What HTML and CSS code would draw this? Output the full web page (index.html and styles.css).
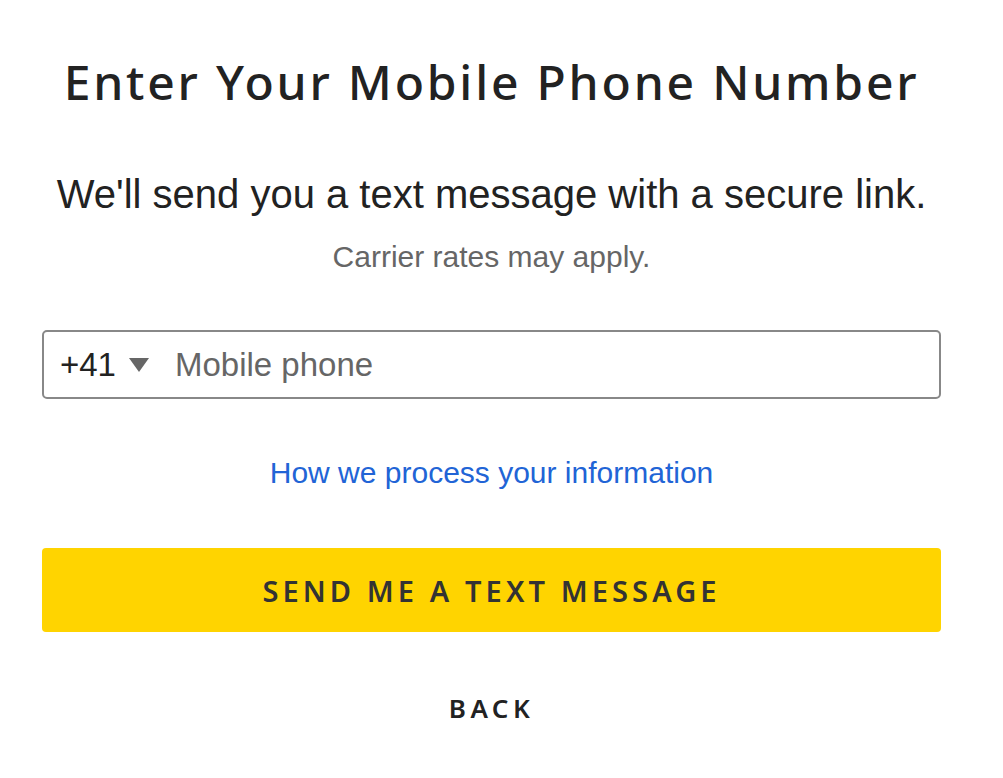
FILE: index.html
```html
<!DOCTYPE html>
<html lang="en">
<head>
    <meta charset="UTF-8">
    <meta name="viewport" content="width=device-width, initial-scale=1.0">
    <title>Enter Your Mobile Phone Number</title>
    <link rel="stylesheet" href="styles.css">
</head>
<body>
    <div class="container">
        <h1>Enter Your Mobile Phone Number</h1>
        <p class="lead">We'll send you a text message with a secure link.</p>
        <p class="note">Carrier rates may apply.</p>

        <div class="phone-field">
            <span class="country">+41</span>
            <span class="caret"></span>
            <input type="tel" placeholder="Mobile phone">
        </div>

        <a href="#" class="info-link">How we process your information</a>

        <button class="btn btn-send">Send me a text message</button>
        <a href="#" class="btn-back">Back</a>
    </div>
</body>
</html>
```

FILE: styles.css
```css
body {
    font-family: 'Liberation Sans', Arial, sans-serif;
    margin: 0;
    padding: 0;
    background: #fff;
    color: #222;
}
.container {
    width: 899px;
    margin-left: 42px;
    display: flex;
    flex-direction: column;
    align-items: center;
    text-align: center;
}
h1 {
    font-family: 'Noto Sans', sans-serif;
    font-weight: 500;
    font-size: 48px;
    letter-spacing: 2.8px;
    line-height: 60px;
    margin: 52px 0 0;
    color: #222;
}
.lead {
    font-size: 40px;
    line-height: 46px;
    margin: 59px 0 0;
    color: #222;
}
.note {
    font-size: 30px;
    line-height: 34px;
    margin: 23px 0 0;
    color: #666;
}
.phone-field {
    align-self: stretch;
    display: flex;
    align-items: center;
    height: 65px;
    margin-top: 56px;
    border: 2px solid #888;
    border-radius: 5px;
    padding: 0 16px;
}
.country {
    font-size: 33px;
    color: #222;
}
.caret {
    width: 0;
    height: 0;
    border-left: 10px solid transparent;
    border-right: 10px solid transparent;
    border-top: 14px solid #666;
    margin: 0 16px 0 13px;
}
.phone-field input {
    flex: 1;
    border: 0;
    outline: 0;
    font-family: inherit;
    font-size: 33px;
    color: #222;
    padding: 0 10px;
}
.phone-field input::placeholder {
    color: #666;
}
.info-link {
    font-size: 30px;
    line-height: 34px;
    margin-top: 57px;
    color: #2164d6;
    text-decoration: none;
}
.btn {
    align-self: stretch;
    height: 84px;
    margin-top: 58px;
    border: 0;
    border-radius: 4px;
    background: #ffd400;
    color: #333;
    font-family: 'Noto Sans', sans-serif;
    font-weight: 600;
    font-size: 29px;
    letter-spacing: 4.1px;
    text-transform: uppercase;
}
.btn-back {
    margin-top: 58px;
    font-family: 'Noto Sans', sans-serif;
    font-weight: 600;
    font-size: 26px;
    letter-spacing: 4.5px;
    text-transform: uppercase;
    color: #222;
    text-decoration: none;
}
```
